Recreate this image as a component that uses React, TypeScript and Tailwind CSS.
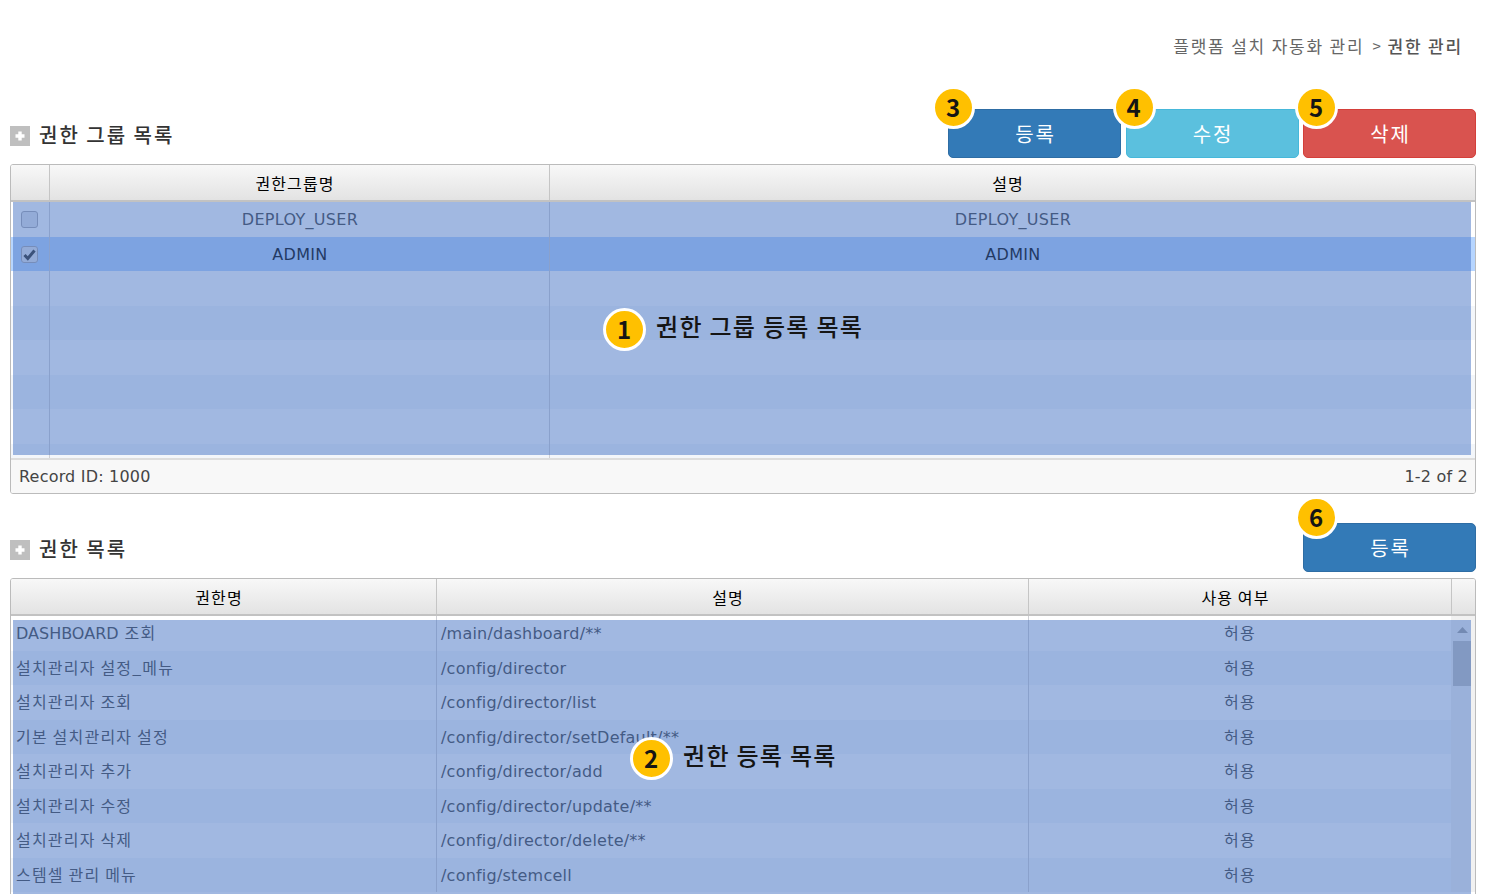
import React from "react";

const BODY = "font-['DejaVu_Sans','Noto_Sans_CJK_KR',sans-serif]";
const KO = "font-['Noto_Sans_CJK_KR',sans-serif]";

function Badge({ n, className }: { n: number; className: string }) {
  return (
    <span
      className={`absolute z-20 flex size-[43px] items-center justify-center rounded-full border-[3px] border-white bg-[#ffc000] font-['Noto_Sans_CJK_KR',sans-serif] text-[24px] leading-none font-bold text-[#151515] ${className}`}
    >
      <span className="block pr-px pb-px">{n}</span>
    </span>
  );
}

function ActionButton({
  label,
  n,
  className,
  badge,
}: {
  label: string;
  n: number;
  className: string;
  badge: string;
}) {
  return (
    <div className="relative">
      <button
        className={`flex h-[49px] w-[173px] items-center justify-center rounded-[5px] border pt-px pl-[2px] text-[20px] tracking-[1.8px] text-white ${KO} ${className}`}
      >
        {label}
      </button>
      <Badge n={n} className={badge} />
    </div>
  );
}

function Title({ children }: { children: React.ReactNode }) {
  return (
    <h2 className={`flex items-center text-[20px] leading-5 font-medium tracking-[2px] text-[#333] ${KO}`}>
      <svg width="20" height="20" viewBox="0 0 20 20" className="mr-[9px]">
        <rect width="20" height="20" fill="#bfbfbf" />
        <path d="M10 5.5v9M5.5 10h9" stroke="#fff" strokeWidth="3.4" />
      </svg>
      <span className="-mt-[2px]">{children}</span>
    </h2>
  );
}

function HeadCell({ children, className }: { children?: React.ReactNode; className: string }) {
  return (
    <div
      className={`flex items-center justify-center border-[#c5c5c5] pt-px pr-[9px] text-[16px] tracking-[1.1px] text-black ${KO} ${className}`}
    >
      {children}
    </div>
  );
}

function Check({ checked }: { checked?: boolean }) {
  return (
    <span className="mt-px mr-px flex size-[17px] items-center justify-center rounded-[3px] border border-[#a9a9b0] bg-[#e2e4ea]">
      {checked && (
        <svg width="13" height="13" viewBox="0 0 13 13">
          <path d="M1.5 7 4.8 10.5 11.5 2.5" fill="none" stroke="#333" strokeWidth="3" />
        </svg>
      )}
    </span>
  );
}

const groups = [
  { name: "DEPLOY_USER", checked: false },
  { name: "ADMIN", checked: true },
  null,
  null,
  null,
  null,
  null,
  null,
];

const permissions = [
  ["DASHBOARD", "조회", "/main/dashboard/**"],
  ["", "설치관리자 설정_메뉴", "/config/director"],
  ["", "설치관리자 조회", "/config/director/list"],
  ["", "기본 설치관리자 설정", "/config/director/setDefault/**"],
  ["", "설치관리자 추가", "/config/director/add"],
  ["", "설치관리자 수정", "/config/director/update/**"],
  ["", "설치관리자 삭제", "/config/director/delete/**"],
  ["", "스템셀 관리 메뉴", "/config/stemcell"],
];

const HEAD = "h-[37px] shrink-0 border-b-2 border-[#c2c2c2] bg-linear-to-b from-[#f8f8f8] to-[#e3e3e3]";

export default function App() {
  return (
    <div className={`flex h-[894px] w-[1495px] flex-col overflow-hidden bg-white pr-[19px] pl-[10px] ${BODY}`}>
      <nav
        className={`mt-[34px] flex h-6 items-center justify-end pr-[13px] text-[17px] tracking-[1.8px] text-[#666] ${KO}`}
      >
        <span>플랫폼 설치 자동화 관리</span>
        <span className="mr-[5px] ml-[8px] text-[15px]">&gt;</span>
        <span className="font-medium text-[#555]">권한 관리</span>
      </nav>

      <section className="mt-[51px] flex h-[49px] items-start justify-between">
        <div className="pt-[17px]">
          <Title>권한 그룹 목록</Title>
        </div>
        <div className="flex gap-[4.5px]">
          <ActionButton n={3} label="등록" badge="-top-[23px] -left-[16px]" className="border-[#2e6da4] bg-[#337ab7]" />
          <ActionButton n={4} label="수정" badge="-top-[23px] -left-[13px]" className="border-[#46b8da] bg-[#5bc0de]" />
          <ActionButton n={5} label="삭제" badge="-top-[23px] -left-[8px]" className="border-[#d43f3a] bg-[#d9534f]" />
        </div>
      </section>

      <section className="relative mt-[6px] flex h-[330px] w-[1466px] shrink-0 flex-col overflow-hidden rounded-[3px] border border-[#bbb]">
        <div className={`flex ${HEAD}`}>
          <HeadCell className="w-[39px] border-r" />
          <HeadCell className="w-[500px] border-r">권한그룹명</HeadCell>
          <HeadCell className="flex-1">설명</HeadCell>
        </div>
        <div className="min-h-0 flex-1 overflow-hidden">
          {groups.map((g, i) => (
            <div
              key={i}
              className={`flex h-[34.5px] text-[16px] tracking-[0.3px] ${
                g?.checked ? "bg-[#b6d5ff] text-black" : i % 2 ? "bg-[#f3f6fa] text-[#444]" : "bg-white text-[#444]"
              }`}
            >
              <div className="flex w-[39px] items-center justify-center border-r border-[#d0d0d5]">
                {g && <Check checked={g.checked} />}
              </div>
              <div className="flex w-[500px] items-center justify-center border-r border-[#d0d0d5] pt-[2px] pl-px">
                {g?.name}
              </div>
              <div className="flex flex-1 items-center justify-center pt-[2px] pl-px">{g?.name}</div>
            </div>
          ))}
        </div>
        <footer className="flex h-[35px] shrink-0 items-center justify-between border-t-2 border-[#ddd] bg-[#f8f8f8] pr-[7px] pl-[8px] text-[16px] tracking-[0.2px] text-[#444]">
          <span>Record ID: 1000</span>
          <span>1-2 of 2</span>
        </footer>
        <div className="absolute top-[37px] left-[2px] h-[253px] w-[1458px] bg-[#4472c4]/50" />
        <Badge n={1} className="top-[143px] left-[592px]" />
        <strong
          className={`absolute top-[143px] left-[645px] text-[24px] leading-9 font-medium tracking-[1.3px] whitespace-nowrap text-[#151515] ${KO}`}
        >
          권한 그룹 등록 목록
        </strong>
      </section>

      <section className="mt-[29px] flex h-[49px] shrink-0 items-start justify-between">
        <div className="pt-[17px]">
          <Title>권한 목록</Title>
        </div>
        <ActionButton n={6} label="등록" badge="-top-[27px] -left-[8px]" className="border-[#2e6da4] bg-[#337ab7]" />
      </section>

      <section className="relative mt-[6px] flex h-[340px] w-[1466px] shrink-0 flex-col overflow-hidden rounded-t-[3px] border border-[#bbb]">
        <div className={`flex ${HEAD}`}>
          <HeadCell className="w-[426px] border-r">권한명</HeadCell>
          <HeadCell className="w-[592px] border-r">설명</HeadCell>
          <HeadCell className="w-[423px] border-r">사용 여부</HeadCell>
          <HeadCell className="flex-1" />
        </div>
        <div className="flex">
          <div className="w-[1440px]">
            {permissions.map(([latin, korean, path], i) => (
              <div
                key={path}
                className={`flex h-[34.5px] text-[16px] text-[#444] ${i % 2 ? "bg-[#f3f6fa]" : "bg-white"}`}
              >
                <div className="flex w-[426px] items-center gap-[6px] border-r border-[#d0d0d5] pl-[5px]">
                  {latin && <span className="pt-[2px]">{latin}</span>}
                  <span className={`pb-[2px] tracking-[1.2px] ${KO}`}>{korean}</span>
                </div>
                <div className="flex w-[592px] items-center border-r border-[#d0d0d5] pt-[2px] pl-[4px] tracking-[0.22px]">
                  {path}
                </div>
                <div className={`flex flex-1 items-center justify-center pb-[2px] tracking-[1.2px] ${KO}`}>허용</div>
              </div>
            ))}
          </div>
          <div className="flex h-[276px] flex-1 flex-col items-center bg-[#f1f1f1]">
            <svg width="11" height="6" viewBox="0 0 11 6" className="mt-[11px] mr-[2px] shrink-0">
              <path d="M0 6 5.5 0 11 6Z" fill="#a3a3a3" />
            </svg>
            <div className="mt-[8px] mr-[2px] h-[45px] w-[18px] shrink-0 bg-[#c1c1c1]" />
          </div>
        </div>
        <div className="absolute top-[41px] left-[2px] h-[300px] w-[1458px] bg-[#4472c4]/50" />
        <Badge n={2} className="top-[158px] left-[619px]" />
        <strong
          className={`absolute top-[158px] left-[672px] text-[24px] leading-9 font-medium tracking-[1.3px] whitespace-nowrap text-[#151515] ${KO}`}
        >
          권한 등록 목록
        </strong>
      </section>
    </div>
  );
}
